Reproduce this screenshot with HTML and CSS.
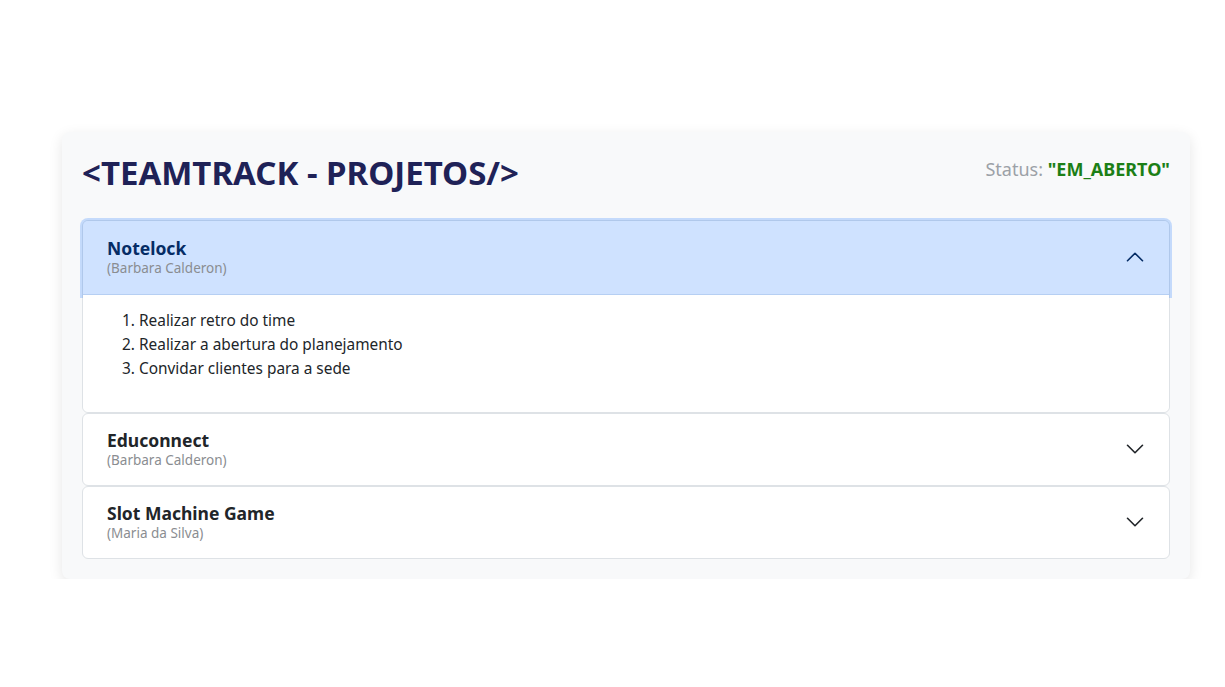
FILE: index.html
```html
<!DOCTYPE html>
<html lang="pt-BR">
<head>
<meta charset="utf-8">
<title>TeamTrack - Projetos</title>
<link rel="stylesheet" href="styles.css">
</head>
<body>
<main class="page">
  <section class="card">
    <header class="card-head">
      <h1 class="title">&lt;TEAMTRACK - PROJETOS/&gt;</h1>
      <div class="status">Status: <strong class="status-value">"EM_ABERTO"</strong></div>
    </header>
    <div class="accordion">
      <div class="acc-item">
        <button class="acc-header open" type="button">
          <span class="acc-text">
            <span class="acc-name">Notelock</span>
            <span class="acc-owner">(Barbara Calderon)</span>
          </span>
          <svg class="chev" viewBox="0 0 16 16" fill="none" stroke-linecap="round" stroke-linejoin="round"><path d="M2 11L8 5L14 11"/></svg>
        </button>
        <div class="acc-body">
          <ol class="tasks">
            <li>Realizar retro do time</li>
            <li>Realizar a abertura do planejamento</li>
            <li>Convidar clientes para a sede</li>
          </ol>
        </div>
      </div>
      <div class="acc-item">
        <button class="acc-header" type="button">
          <span class="acc-text">
            <span class="acc-name">Educonnect</span>
            <span class="acc-owner">(Barbara Calderon)</span>
          </span>
          <svg class="chev" viewBox="0 0 16 16" fill="none" stroke-linecap="round" stroke-linejoin="round"><path d="M2 5L8 11L14 5"/></svg>
        </button>
      </div>
      <div class="acc-item">
        <button class="acc-header" type="button">
          <span class="acc-text">
            <span class="acc-name">Slot Machine Game</span>
            <span class="acc-owner">(Maria da Silva)</span>
          </span>
          <svg class="chev" viewBox="0 0 16 16" fill="none" stroke-linecap="round" stroke-linejoin="round"><path d="M2 5L8 11L14 5"/></svg>
        </button>
      </div>
    </div>
  </section>
</main>
</body>
</html>
```
FILE: styles.css
```css
* { box-sizing: border-box; }
html, body { margin: 0; padding: 0; background: #fff; }
body {
  font-family: "Noto Sans", "Open Sans", sans-serif;
  color: #212529;
}
.page {
  padding: 132px 35px 0 62px;
}
.card {
  background: #f8f9fa;
  border-radius: 8px;
  box-shadow: 0 4px 14px rgba(0, 0, 0, 0.1);
  padding: 20px;
}
.card-head {
  display: flex;
  justify-content: space-between;
  align-items: flex-start;
  margin-bottom: 26px;
}
.title {
  margin: 0;
  font-size: 33px;
  line-height: 42px;
  font-weight: 700;
  color: #1f2257;
}
.status {
  margin-top: 3px;
  font-size: 18px;
  line-height: 28px;
  color: #9ca1a7;
}
.status-value {
  color: #1c7f16;
  font-weight: 700;
}
.accordion {
  display: flex;
  flex-direction: column;
}
.acc-item {
  background: #fff;
  border: 1px solid #dee2e6;
  border-radius: 6px;
}
.acc-header {
  width: 100%;
  display: flex;
  align-items: center;
  justify-content: space-between;
  padding: 15px 24px 16px 24px;
  background: transparent;
  border: 0;
  font: inherit;
  text-align: left;
  cursor: pointer;
  color: #212529;
}
.acc-header.open {
  background: #cfe2ff;
  color: #052c65;
  border-radius: 5px 5px 0 0;
  box-shadow: 0 0 0 3px rgba(13, 110, 253, 0.22), inset 0 -1px 0 #b6cff3;
  padding-top: 16px;
  padding-bottom: 18px;
}
.acc-text {
  display: flex;
  flex-direction: column;
}
.acc-name {
  font-size: 17.5px;
  line-height: 22px;
  font-weight: 700;
}
.acc-owner {
  font-size: 13.5px;
  line-height: 18px;
  color: #8a8d91;
}
.chev {
  width: 20px;
  height: 20px;
  stroke: #212529;
  stroke-width: 1.3;
  flex: none;
}
.open .chev { stroke: #052c65; }
.acc-body {
  position: relative;
  background: #fff;
  border-radius: 0 0 6px 6px;
  padding: 14px 24px 16px 24px;
}
.tasks {
  margin: 0 0 15px 0;
  padding-left: 32px;
  font-size: 15.4px;
  line-height: 24px;
}
```
